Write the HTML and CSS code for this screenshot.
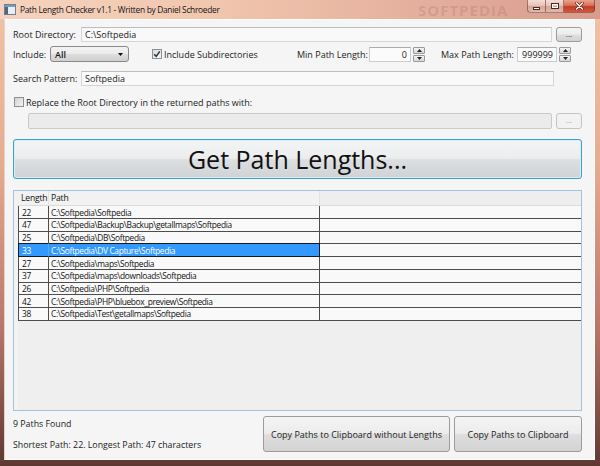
FILE: index.html
```html
<!DOCTYPE html>
<html>
<head>
<meta charset="utf-8">
<title>Path Length Checker</title>
<link rel="stylesheet" href="styles.css">
</head>
<body>
<div class="window">
  <div class="titlebar">
    <svg class="appicon" viewBox="0 0 12 11" width="12" height="11">
      <rect x="0.5" y="0.5" width="11" height="10" fill="#e9eef3" stroke="#6d7f92"/>
      <rect x="1" y="1" width="10" height="2" fill="#7a9bbd"/>
      <rect x="1" y="3" width="3" height="7" fill="#51667c"/>
    </svg>
    <span class="title">Path Length Checker v1.1 - Written by Daniel Schroeder</span>
    <span class="watermark">SOFTPEDIA</span>
    <div class="caption">
      <div class="cbtn cmin"><span class="glyph-min"></span></div>
      <div class="cbtn cmax"><span class="glyph-max"></span></div>
      <div class="cbtn cclose">
        <svg viewBox="0 0 9 8" width="9" height="8"><path d="M1.5 1 L7.5 7 M7.5 1 L1.5 7" stroke="#5a1a12" stroke-width="2.6" stroke-linecap="round"/><path d="M1.5 1 L7.5 7 M7.5 1 L1.5 7" stroke="#ffffff" stroke-width="1.5" stroke-linecap="round"/></svg>
      </div>
    </div>
  </div>
  <div class="frame">
    <div class="client">
      <div class="row r-root">
        <span class="lbl lbl-dir">Root Directory:</span>
        <div class="field field-grow">C:\Softpedia</div>
        <div class="btn btn-dots">...</div>
      </div>
      <div class="row r-include">
        <span class="lbl lbl-inc">Include:</span>
        <div class="combo"><span>All</span>
          <svg class="combo-arrow" viewBox="0 0 5 3" width="5" height="3"><path d="M0 0 H5 L2.5 3 Z" fill="#111"/></svg>
        </div>
        <div class="checkgroup">
          <span class="checkbox">
            <svg viewBox="0 0 10 10" width="10" height="10"><path d="M2.2 5.2 L4.2 7.4 L7.8 2.4" fill="none" stroke="#23303f" stroke-width="1.5"/></svg>
          </span>
          <span class="checktext">Include Subdirectories</span>
        </div>
        <span class="lbl lbl-min">Min Path Length:</span>
        <div class="spin spin-min">
          <div class="spin-val">0</div>
          <div class="spin-btns">
            <div class="sbtn"><svg viewBox="0 0 5 3" width="5" height="3"><path d="M0 3 H5 L2.5 0 Z" fill="#222"/></svg></div>
            <div class="sbtn"><svg viewBox="0 0 5 3" width="5" height="3"><path d="M0 0 H5 L2.5 3 Z" fill="#222"/></svg></div>
          </div>
        </div>
        <span class="lbl lbl-max">Max Path Length:</span>
        <div class="spin spin-max">
          <div class="spin-val">999999</div>
          <div class="spin-btns">
            <div class="sbtn"><svg viewBox="0 0 5 3" width="5" height="3"><path d="M0 3 H5 L2.5 0 Z" fill="#222"/></svg></div>
            <div class="sbtn"><svg viewBox="0 0 5 3" width="5" height="3"><path d="M0 0 H5 L2.5 3 Z" fill="#222"/></svg></div>
          </div>
        </div>
      </div>
      <div class="row r-search">
        <span class="lbl lbl-dir">Search Pattern:</span>
        <div class="field field-search">Softpedia</div>
      </div>
      <div class="row r-replace">
        <span class="checkbox unchecked"></span>
        <span class="checktext">Replace the Root Directory in the returned paths with:</span>
      </div>
      <div class="row r-replfield">
        <div class="field field-grow field-disabled"></div>
        <div class="btn btn-dots btn-disabled">...</div>
      </div>
      <div class="bigbtn">Get Path Lengths...</div>
      <div class="grid">
        <div class="grow-row head">
          <div class="rh"></div>
          <div class="c c1">Length</div>
          <div class="c c2">Path</div>
          <div class="c c3"></div>
        </div>
        <div class="grow-row"><div class="rh"></div><div class="c c1">22</div><div class="c c2">C:\Softpedia\Softpedia</div><div class="c c3"></div></div>
        <div class="grow-row"><div class="rh"></div><div class="c c1">47</div><div class="c c2">C:\Softpedia\Backup\Backup\getallmaps\Softpedia</div><div class="c c3"></div></div>
        <div class="grow-row"><div class="rh"></div><div class="c c1">25</div><div class="c c2">C:\Softpedia\DB\Softpedia</div><div class="c c3"></div></div>
        <div class="grow-row sel"><div class="rh"></div><div class="c c1">33</div><div class="c c2">C:\Softpedia\DV Capture\Softpedia</div><div class="c c3"></div></div>
        <div class="grow-row"><div class="rh"></div><div class="c c1">27</div><div class="c c2">C:\Softpedia\maps\Softpedia</div><div class="c c3"></div></div>
        <div class="grow-row"><div class="rh"></div><div class="c c1">37</div><div class="c c2">C:\Softpedia\maps\downloads\Softpedia</div><div class="c c3"></div></div>
        <div class="grow-row"><div class="rh"></div><div class="c c1">26</div><div class="c c2">C:\Softpedia\PHP\Softpedia</div><div class="c c3"></div></div>
        <div class="grow-row"><div class="rh"></div><div class="c c1">42</div><div class="c c2">C:\Softpedia\PHP\bluebox_preview\Softpedia</div><div class="c c3"></div></div>
        <div class="grow-row"><div class="rh"></div><div class="c c1">38</div><div class="c c2">C:\Softpedia\Test\getallmaps\Softpedia</div><div class="c c3"></div></div>
        <div class="grid-empty"></div>
      </div>
      <div class="bottom">
        <div class="status">
          <div class="status-line">9 Paths Found</div>
          <div class="status-line">Shortest Path: 22. Longest Path: 47 characters</div>
        </div>
        <div class="btn btn-copy1">Copy Paths to Clipboard without Lengths</div>
        <div class="btn btn-copy2">Copy Paths to Clipboard</div>
      </div>
    </div>
  </div>
</div>
</body>
</html>
```
FILE: styles.css
```css
* { box-sizing: border-box; }
html, body { margin: 0; padding: 0; }
body {
  width: 600px;
  height: 466px;
  overflow: hidden;
  font-family: "Open Sans", "Noto Sans", sans-serif;
  color: #1b1b1b;
  background: #5b352f;
}
.window {
  width: 600px;
  height: 466px;
  display: flex;
  flex-direction: column;
  background: linear-gradient(180deg, #f1c3a6 0%, #e6ac90 35%, #b9776a 70%, #5e3831 100%);
}
.titlebar {
  height: 19px;
  flex: none;
  display: flex;
  align-items: center;
  padding-left: 4px;
  position: relative;
  background: linear-gradient(90deg, #f5d3be 0%, #f1c6ae 35%, #e6b3a0 65%, #d99b8c 100%);
}
.appicon { flex: none; margin-right: 4px; margin-top: -1px; }
.title { font-size: 8.4px; color: #151515; letter-spacing: -0.3px; }
.watermark {
  position: absolute;
  left: 418px;
  top: 0px;
  font-size: 15px;
  font-weight: 700;
  letter-spacing: 1px;
  color: rgba(150, 95, 85, 0.22);
}
.caption {
  position: absolute;
  right: 5px;
  top: 0;
  display: flex;
  height: 13px;
}
.cbtn {
  height: 13px;
  display: flex;
  align-items: center;
  justify-content: center;
  border: 1px solid rgba(90, 50, 45, 0.55);
  border-top: none;
  background: linear-gradient(180deg, #f4ddd6 0%, #e9c3b8 45%, #d8a598 55%, #e3b8ab 100%);
}
.cmin { width: 19px; border-bottom-left-radius: 4px; }
.cmax { width: 18px; border-left: none; }
.cclose {
  width: 31px;
  border-left: none;
  border-bottom-right-radius: 4px;
  background: linear-gradient(180deg, #eba28e 0%, #d9715a 45%, #c23d26 55%, #d2583c 100%);
}
.glyph-min {
  width: 7px;
  height: 3px;
  margin-top: 4px;
  background: #fff;
  border: 1px solid #4a2a25;
}
.glyph-max {
  width: 8px;
  height: 6px;
  border: 1px solid #4a2a25;
  box-shadow: inset 0 0 0 1px #fff;
  background: transparent;
}
.frame {
  flex: 1;
  display: flex;
  padding: 0 5px 6px 4px;
}
.client {
  flex: 1;
  display: flex;
  flex-direction: column;
  background: #f5f5f5;
  padding: 8px 12px 0 8px;
  font-size: 9px;
  border: 1px solid #ffffff;
  border-left-color: #e6d0c8;
}
.row { display: flex; align-items: center; flex: none; }
.lbl { flex: none; white-space: nowrap; }
.lbl-dir { width: 68px; }
.lbl-inc { width: 37px; }
.lbl-min { width: 72px; margin-left: 0; }
.lbl-max { width: 76px; margin-left: 16px; }

.r-root { height: 15px; margin-top: -1px; }
.field {
  height: 15px;
  background: #f9f9f9;
  border: 1px solid #d4d6da;
  border-top-color: #b9bcc2;
  padding: 0 3px;
  display: flex;
  align-items: center;
  white-space: nowrap;
}
.field-grow { flex: 1; }
.field-search { width: 473px; }
.field-disabled {
  background: #ebebeb;
  border: 1px solid #c9cacc;
  border-radius: 2px;
  height: 16px;
}
.btn {
  flex: none;
  display: flex;
  align-items: center;
  justify-content: center;
  border: 1px solid #9c9c9c;
  border-radius: 3px;
  background: linear-gradient(180deg, #f4f4f4 0%, #ececec 48%, #dedede 52%, #d3d3d3 100%);
  color: #1b1b1b;
  white-space: nowrap;
}
.btn-dots {
  width: 26px;
  height: 15px;
  margin-left: 4px;
  font-size: 8px;
  line-height: 1;
  padding-bottom: 2px;
}
.btn-disabled {
  height: 16px;
  color: #9a9a9a;
  border-color: #c4c4c4;
  background: #f2f2f2;
}

.r-include { height: 16px; margin-top: 4px; }
.combo {
  flex: none;
  width: 79px;
  height: 16px;
  display: flex;
  align-items: center;
  justify-content: space-between;
  padding: 0 4px 0 4px;
  border: 1px solid #8a8a8a;
  border-radius: 3px;
  background: linear-gradient(180deg, #f3f3f3 0%, #ebebeb 48%, #dddddd 52%, #d0d0d0 100%);
  font-weight: 600;
}
.combo-arrow { margin-right: 1px; }
.checkgroup {
  flex: none;
  width: 145px;
  margin-left: 23px;
  display: flex;
  align-items: center;
}
.checkbox {
  flex: none;
  width: 10px;
  height: 10px;
  border: 1px solid #8e8f8f;
  background: linear-gradient(135deg, #dcdcdc 0%, #f6f6f6 100%);
  display: flex;
  align-items: center;
  justify-content: center;
}
.checkbox svg { margin: -1px; }
.checktext { margin-left: 2px; white-space: nowrap; }
.spin {
  flex: none;
  display: flex;
  align-items: center;
  height: 16px;
}
.spin-min { width: 56px; }
.spin-max { width: 54px; }
.spin-val {
  flex: 1;
  height: 15px;
  border: 1px solid #c9ccd1;
  border-top-color: #a9adb3;
  background: #fbfbfb;
  text-align: right;
  padding-right: 3px;
  display: flex;
  align-items: center;
  justify-content: flex-end;
}
.spin-btns {
  flex: none;
  width: 12px;
  margin-left: 2px;
  height: 15px;
  display: flex;
  flex-direction: column;
  gap: 1px;
}
.sbtn {
  flex: 1;
  display: flex;
  align-items: center;
  justify-content: center;
  border: 1px solid #9a9a9a;
  border-radius: 1px;
  background: linear-gradient(180deg, #f5f5f5, #d6d6d6);
}

.r-search { height: 15px; margin-top: 9px; }
.r-replace { height: 14px; margin-top: 9px; padding-left: 1px; }
.r-replace .checktext { margin-left: 2px; }
.unchecked { background: linear-gradient(135deg, #d3d3d3 0%, #f3f3f3 100%); }
.r-replfield { height: 16px; margin-top: 4px; padding-left: 15px; }

.bigbtn {
  flex: none;
  height: 40px;
  margin-top: 10px;
  display: flex;
  align-items: center;
  justify-content: center;
  border: 1px solid #3c9fcc;
  border-radius: 3px;
  box-shadow: inset 0 0 0 1px #d9eef8;
  background: linear-gradient(180deg, #f3f4f5 0%, #eceded 48%, #dcdee0 52%, #d0d3d6 100%);
  font-size: 25px;
  color: #111;
  padding-bottom: 1px;
}

.grid {
  flex: none;
  height: 221px;
  margin-top: 11px;
  border: 1px solid #a3c2df;
  background: #efefef;
  display: flex;
  flex-direction: column;
  font-size: 8.4px;
  letter-spacing: -0.35px;
  color: #111;
}
.grow-row {
  display: flex;
  height: 12.72px;
  flex: none;
  background: #f9f9f9;
}
.grow-row .rh { width: 4px; flex: none; background: #f3f3f3; }
.grow-row .c {
  display: flex;
  align-items: center;
  white-space: nowrap;
  overflow: hidden;
  border-bottom: 1px solid #4d4d4d;
}
.grow-row .c1 { width: 31px; flex: none; padding-left: 3px; border-left: 1px solid #4d4d4d; border-right: 1px solid #4d4d4d; }
.grow-row .c2 { width: 271px; flex: none; padding-left: 2px; border-right: 1px solid #4d4d4d; }
.grow-row .c3 { flex: 1; }
.grow-row.head {
  height: 15.3px;
  background: #f2f2f2;
  font-size: 8.6px;
  letter-spacing: -0.2px;
}
.grow-row.head .rh { background: #f2f2f2; }
.grow-row.head .c { border-bottom: 1px solid #dcdcdc; padding-bottom: 1px; }
.grow-row.head .c1 { border-left: none; border-right: 1px solid #e4e4e4; padding-left: 3px; }
.grow-row.head .c2 { border-right: 1px solid #e2e2e2; padding-left: 2px; }
.grow-row.head .c3 { background: #eeeeee; }
.grow-row.sel .c1,
.grow-row.sel .c2 {
  background: #3399ff;
  color: #fff;
  border-top: 1px solid #1a1a1a;
  border-bottom: 1px solid #1a1a1a;
  margin-top: -1px;
  height: calc(100% + 1px);
}
.grow-row.sel .c1 { border-left-color: #1a1a1a; border-right-color: #5aa8f0; }
.grow-row.sel .c2 { border-right-color: #1a1a1a; }
.grid-empty { flex: 1; background: #efefef; border-left: 4px solid #f3f3f3; }

.bottom {
  flex: none;
  height: 36px;
  margin-top: 5px;
  display: flex;
  align-items: stretch;
}
.status {
  flex: 1;
  display: flex;
  flex-direction: column;
  justify-content: space-between;
  padding: 1px 0 1px 0;
  font-size: 8.8px;
}
.status-line { height: 13px; display: flex; align-items: center; white-space: nowrap; }
.btn-copy1 { width: 187px; height: 36px; font-size: 9px; }
.btn-copy2 { width: 128px; height: 36px; margin-left: 4px; font-size: 9px; }
```
